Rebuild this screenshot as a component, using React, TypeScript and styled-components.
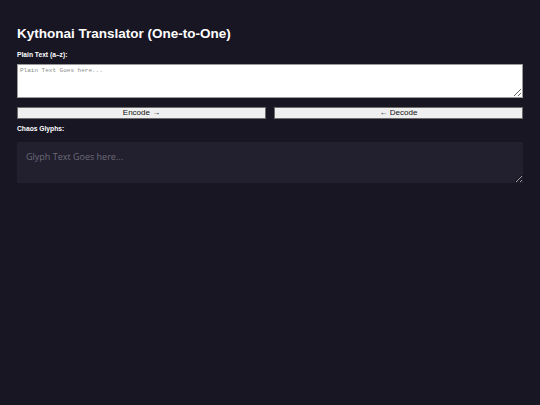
import React, { useState } from "react";
import styled, { createGlobalStyle } from "styled-components";

const GlobalStyle = createGlobalStyle`
  html, body {
    margin: 0;
    padding: 0;
    background: #191624;
  }
  body {
    font-family: "Liberation Sans", Arial, sans-serif;
    color: #ffffff;
  }
`;

const App: React.FC = () => {
  const [plain, setPlain] = useState("");
  const [glyphs, setGlyphs] = useState("");

  return (
    <Page>
      <GlobalStyle />
      <Title>Kythonai Translator (One-to-One)</Title>
      <Label>Plain Text (a–z):</Label>
      <PlainInput
        value={plain}
        onChange={(e) => setPlain(e.target.value)}
        placeholder="Plain Text Goes here..."
      />
      <ButtonRow>
        <ActionButton>Encode →</ActionButton>
        <ActionButton>← Decode</ActionButton>
      </ButtonRow>
      <Label $top={6}>Chaos Glyphs:</Label>
      <GlyphInput
        value={glyphs}
        onChange={(e) => setGlyphs(e.target.value)}
        placeholder="Glyph Text Goes here..."
      />
    </Page>
  );
};

export default App;

const Page = styled.div`
  display: flex;
  flex-direction: column;
  padding: 26px 17px 0;
  min-height: 405px;
  box-sizing: border-box;
`;

const Title = styled.h1`
  margin: 0;
  font-size: 13.5px;
  line-height: 16px;
  font-weight: 700;
  color: #ffffff;
`;

const Label = styled.label<{ $top?: number }>`
  display: block;
  margin-top: ${(p) => p.$top ?? 9}px;
  font-size: 6.7px;
  line-height: 8px;
  font-weight: 700;
  color: #ffffff;
`;

const PlainInput = styled.textarea`
  margin-top: 5px;
  height: 34px;
  width: 100%;
  box-sizing: border-box;
  padding: 2px;
  border: 1px solid #9a9a9a;
  background: #ffffff;
  font-family: "Liberation Mono", "DejaVu Sans Mono", monospace;
  font-size: 6px;
  color: #000;
  outline: none;

  &::placeholder {
    color: #8a8a8a;
  }
`;

const ButtonRow = styled.div`
  display: grid;
  grid-template-columns: 1fr 1fr;
  gap: 8px;
  margin-top: 9px;
`;

const ActionButton = styled.button`
  height: 12px;
  padding: 0;
  border: 1px solid #6d6d6d;
  background: #efefef;
  color: #111111;
  font-family: "Liberation Sans", Arial, sans-serif;
  font-size: 8px;
  line-height: 10px;
  cursor: pointer;
`;

const GlyphInput = styled.textarea`
  margin-top: 9px;
  height: 41px;
  width: 100%;
  box-sizing: border-box;
  padding: 8px 9px;
  border: none;
  background: #22202f;
  color: #ffffff;
  font-family: "Open Sans", "Noto Sans", sans-serif;
  font-size: 9px;
  outline: none;

  &::placeholder {
    color: #6c6a78;
  }
`;
